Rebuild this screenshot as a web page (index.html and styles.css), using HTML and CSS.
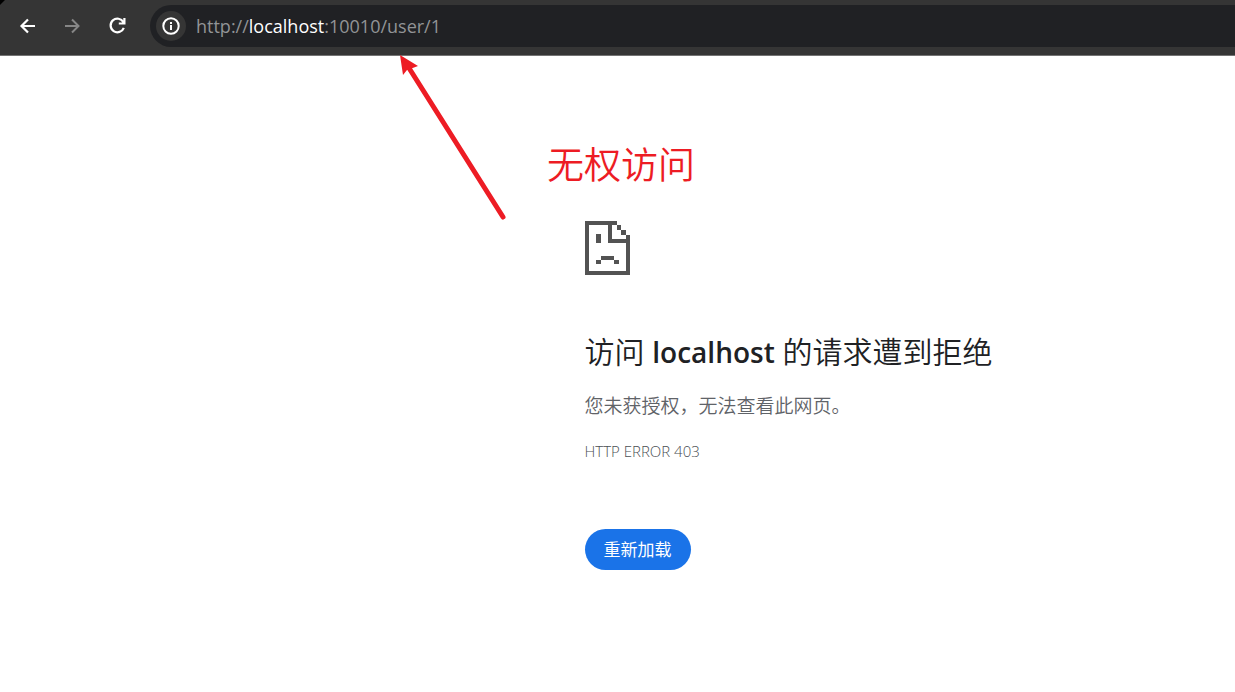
FILE: index.html
```html
<!DOCTYPE html>
<html lang="zh-CN">
<head>
<meta charset="utf-8">
<title>localhost</title>
<link rel="stylesheet" href="styles.css">
</head>
<body>
<header class="toolbar">
  <nav class="nav">
    <button class="nav-button" type="button" aria-label="后退">
      <svg width="20" height="20" viewBox="0 0 20 20"><path d="M17 10H4M10 3.5L3.500 10L10 16.500" fill="none" stroke="currentColor" stroke-width="2.200"/></svg>
    </button>
    <button class="nav-button" type="button" aria-label="前进" disabled>
      <svg width="20" height="20" viewBox="0 0 20 20"><path d="M2 10H15M9 3.500L15.500 10L9 16.500" fill="none" stroke="currentColor" stroke-width="2"/></svg>
    </button>
    <button class="nav-button" type="button" aria-label="重新加载此页">
      <svg width="20" height="20" viewBox="0 0 20 20"><path d="M15.400 6.200A6.800 6.800 0 1 0 15.800 11.800M16.400 2V7.500H10.800" fill="none" stroke="currentColor" stroke-width="2.200"/></svg>
    </button>
  </nav>
  <div class="address">
    <button class="site-info" type="button" aria-label="查看网站信息">
      <svg width="18" height="18" viewBox="0 0 18 18"><circle cx="9" cy="9" r="7.700" fill="none" stroke="currentColor" stroke-width="2"/><path d="M8 8h2v5H8zM8 5h2v2H8z" fill="currentColor"/></svg>
    </button>
    <span class="url">http://<span class="host">localhost</span>:10010/user/1</span>
  </div>
</header>
<main class="page">
  <section class="error">
    <svg class="sad-page" width="45" height="55" viewBox="0 0 45 55" shape-rendering="crispEdges"><path fill="#535353" d="M0 0H32V4H27V18H41V14H45V54H0ZM4 4V50H41V22H23V4ZM32 4h4v5h-4zM36 9h5v5h-5zM11 13h5v9h-5zM16 35h13v4H16zM11 39h5v4h-5zM29 39h5v4h-5z" fill-rule="evenodd"/></svg>
    <h1 class="title">访问 <strong class="title-host">localhost</strong> 的请求遭到拒绝</h1>
    <p class="message">您未获授权，无法查看此网页。</p>
    <p class="code">HTTP ERROR 403</p>
    <button class="reload" type="button">重新加载</button>
  </section>
  <svg class="arrow" width="108" height="166" viewBox="0 0 108 166" aria-hidden="true"><path d="M9 13L103 162" stroke="#ed1c24" stroke-width="5" stroke-linecap="round"/><path d="M0 0L18 11L10 14L7 15L3 20Z" fill="#ed1c24"/></svg>
  <p class="note">无权访问</p>
</main>
</body>
</html>
```
FILE: styles.css
```css
* {
  box-sizing: border-box;
}

body {
  margin: 0;
  background: #fff;
  color: #202124;
  font-family: "Open Sans", "Noto Sans CJK SC", sans-serif;
}

button {
  padding: 0;
  border: 0;
  font-family: inherit;
}

.toolbar {
  display: flex;
  gap: 16px;
  padding: 5px 0 8px 12px;
  border-bottom: 1px solid #737373;
  background: linear-gradient(135deg, #000 3px, #353535 4px);
}

.nav {
  display: flex;
  align-items: center;
  gap: 13px;
}

.nav-button {
  display: flex;
  align-items: center;
  justify-content: center;
  width: 32px;
  height: 32px;
  background: transparent;
  color: #fff;
}

.nav-button:disabled {
  color: #868686;
}

.address {
  display: flex;
  flex: 1;
  align-items: center;
  gap: 10px;
  height: 42px;
  padding-left: 6px;
  border-radius: 21px 0 0 21px;
  background: #202124;
}

.site-info {
  display: flex;
  align-items: center;
  justify-content: center;
  width: 30px;
  height: 30px;
  border-radius: 50%;
  background: #353535;
  color: #fff;
}

.url {
  color: #929496;
  font-size: 18px;
  line-height: 24px;
}

.host {
  color: #fff;
}

.page {
  position: relative;
}

.error {
  display: flex;
  flex-direction: column;
  align-items: flex-start;
  margin-left: calc(50% - 33px);
  padding: 165px 24px 0 0;
}

.title {
  margin: 56px 0 0;
  font-size: 30px;
  font-weight: 350;
  line-height: 40px;
}

.title-host {
  font-size: 28px;
  font-weight: 600;
}

.message {
  margin: 19px 0 0;
  color: #5f6368;
  font-size: 19px;
  font-weight: 350;
  line-height: 30px;
}

.code {
  margin: 20px 0 0;
  color: #4b4f54;
  font-size: 15px;
  font-weight: 300;
  line-height: 20px;
}

.reload {
  margin-top: 68px;
  padding: 0 19px;
  border-radius: 21px;
  background: #1a73e8;
  color: #fff;
  font-size: 17px;
  line-height: 41px;
}

.arrow {
  position: absolute;
  top: -1px;
  left: 400px;
}

.note {
  position: absolute;
  top: 85px;
  left: 547px;
  margin: 0;
  color: #ed1c24;
  font-size: 37px;
  font-weight: 350;
  line-height: 48px;
}
```
